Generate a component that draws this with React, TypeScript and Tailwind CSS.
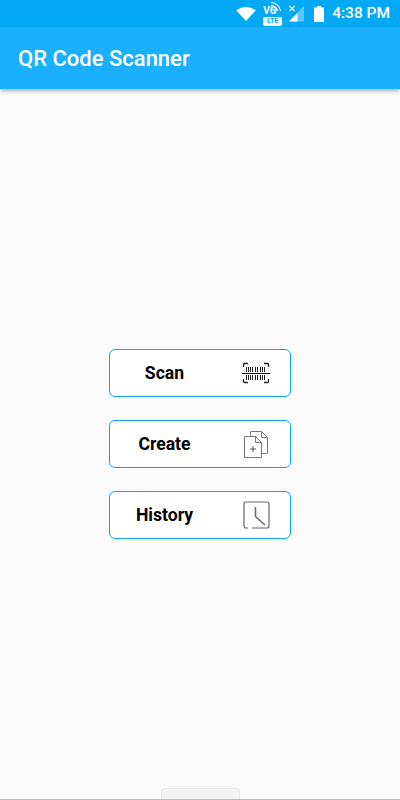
const actions = [
  { label: "Scan", icon: <ScanIcon /> },
  { label: "Create", icon: <CreateIcon /> },
  { label: "History", icon: <HistoryIcon /> },
];

function ScanIcon() {
  const bars = [4, 6, 8, 10, 13, 15, 18, 20, 22];
  return (
    <svg width="28" height="22" viewBox="0 0 28 22" fill="none" stroke="#222" strokeWidth="1">
      <path d="M1.5 5V2.5Q1.5 1.5 2.5 1.5H6M22 1.5H25.5Q26.5 1.5 26.5 2.5V5M1.5 17V19.5Q1.5 20.5 2.5 20.5H6M22 20.5H25.5Q26.5 20.5 26.5 19.5V17" strokeWidth="1.3" />
      <path d="M0 11.5H28" stroke="#111" />
      {bars.map((x) => (
        <path key={x} d={`M${x + 0.5} 5V10M${x + 0.5} 13V18`} />
      ))}
    </svg>
  );
}

function CreateIcon() {
  return (
    <svg width="24" height="27" viewBox="0 0 24 27" fill="none" stroke="#777" strokeWidth="1">
      <path d="M6.5 4.5V0.5H17.5L23.5 6.5V22.5H17.5" />
      <path d="M17.5 0.5V6.5H23.5" />
      <path d="M0.5 26.5V5.5H11.5L17.5 11.5V26.5Z" fill="#fff" />
      <path d="M11.5 5.5V11.5H17.5" />
      <path d="M9 15V21M6 18H12" stroke="#555" />
    </svg>
  );
}

function HistoryIcon() {
  return (
    <svg width="27" height="28" viewBox="0 0 27 28" fill="none" stroke="#666" strokeWidth="1.2">
      <path d="M5 27H3Q1 27 1 25V3Q1 1 3 1H24Q26 1 26 3V25Q26 27 24 27H9" />
      <path d="M12.5 6V15.5L22 24" strokeWidth="1.5" />
    </svg>
  );
}

function StatusIcons() {
  return (
    <div className="flex items-center text-white">
      <svg width="20" height="14" viewBox="0 0 21 15" className="mr-[7px]">
        <path d="M0 3.6Q10.5 -3.6 21 3.6L10.5 15Z" fill="#fff" />
      </svg>
      <div className="relative mr-[7px] h-[25px] w-[19px]">
        <span className="absolute left-0 top-[5px] text-[10px] font-bold leading-[10px]">VO</span>
        <svg width="12" height="12" viewBox="0 0 12 12" className="absolute right-0 top-0" fill="none" stroke="#fff" strokeWidth="1.2">
          <path d="M1 1.5Q9 2 10.5 10M1 4.5Q6.5 5 7.5 10M1 7.5Q3.5 8 4.5 10" />
        </svg>
        <span className="absolute bottom-0 left-0 flex h-[9px] w-[19px] items-center justify-center rounded-[2px] bg-white text-[7px] font-bold text-[#03a9f4]">LTE</span>
      </div>
      <svg width="15" height="17" viewBox="0 0 16 17" className="mr-[10px]">
        <path d="M16 0V17H0Z" fill="#fff" fillOpacity="0.35" />
        <path d="M9 8V17H0Z" fill="#fff" />
        <path d="M0.5 0.5L6 6M6 0.5L0.5 6" stroke="#fff" strokeWidth="1.2" />
      </svg>
      <svg width="10" height="16" viewBox="0 0 10 16" className="mr-[8px]">
        <path d="M3 0H7V1.5H10V16H0V1.5H3Z" fill="#fff" />
      </svg>
      <span className="pt-[1px] text-[15.5px] font-medium leading-none">4:38 PM</span>
    </div>
  );
}

export default function App() {
  return (
    <div className="flex h-[800px] w-[400px] flex-col overflow-hidden bg-[#fafafa] font-['Roboto',sans-serif]">
      <div className="flex h-[27px] shrink-0 items-center justify-end bg-[#03a9f4] pr-[10px]">
        <StatusIcons />
      </div>
      <header className="z-10 flex h-[62px] shrink-0 items-center bg-[#1ab0fd] pl-[18px] shadow-[0_2px_4px_rgba(0,0,0,0.3)]">
        <h1 className="text-[22px] font-medium text-white">QR Code Scanner</h1>
      </header>
      <main className="flex flex-1 flex-col items-center justify-center gap-[23px] pt-[11px]">
        {actions.map(({ label, icon }) => (
          <button
            key={label}
            className="flex h-[48px] w-[182px] items-center rounded-[6px] border border-[#0ea5f5] bg-white"
          >
            <span className="w-[109px] pt-[2px] text-center text-[17.6px] font-bold leading-none text-black">{label}</span>
            <span className="flex w-[64px] justify-center pl-[10px]">{icon}</span>
          </button>
        ))}
      </main>
      <footer className="flex h-[12px] shrink-0 justify-center border-b border-[#bdbdbd]">
        <div className="h-full w-[79px] rounded-t-[4px] border border-b-0 border-[#e8e8e8] bg-[#f3f3f3]" />
      </footer>
    </div>
  );
}
